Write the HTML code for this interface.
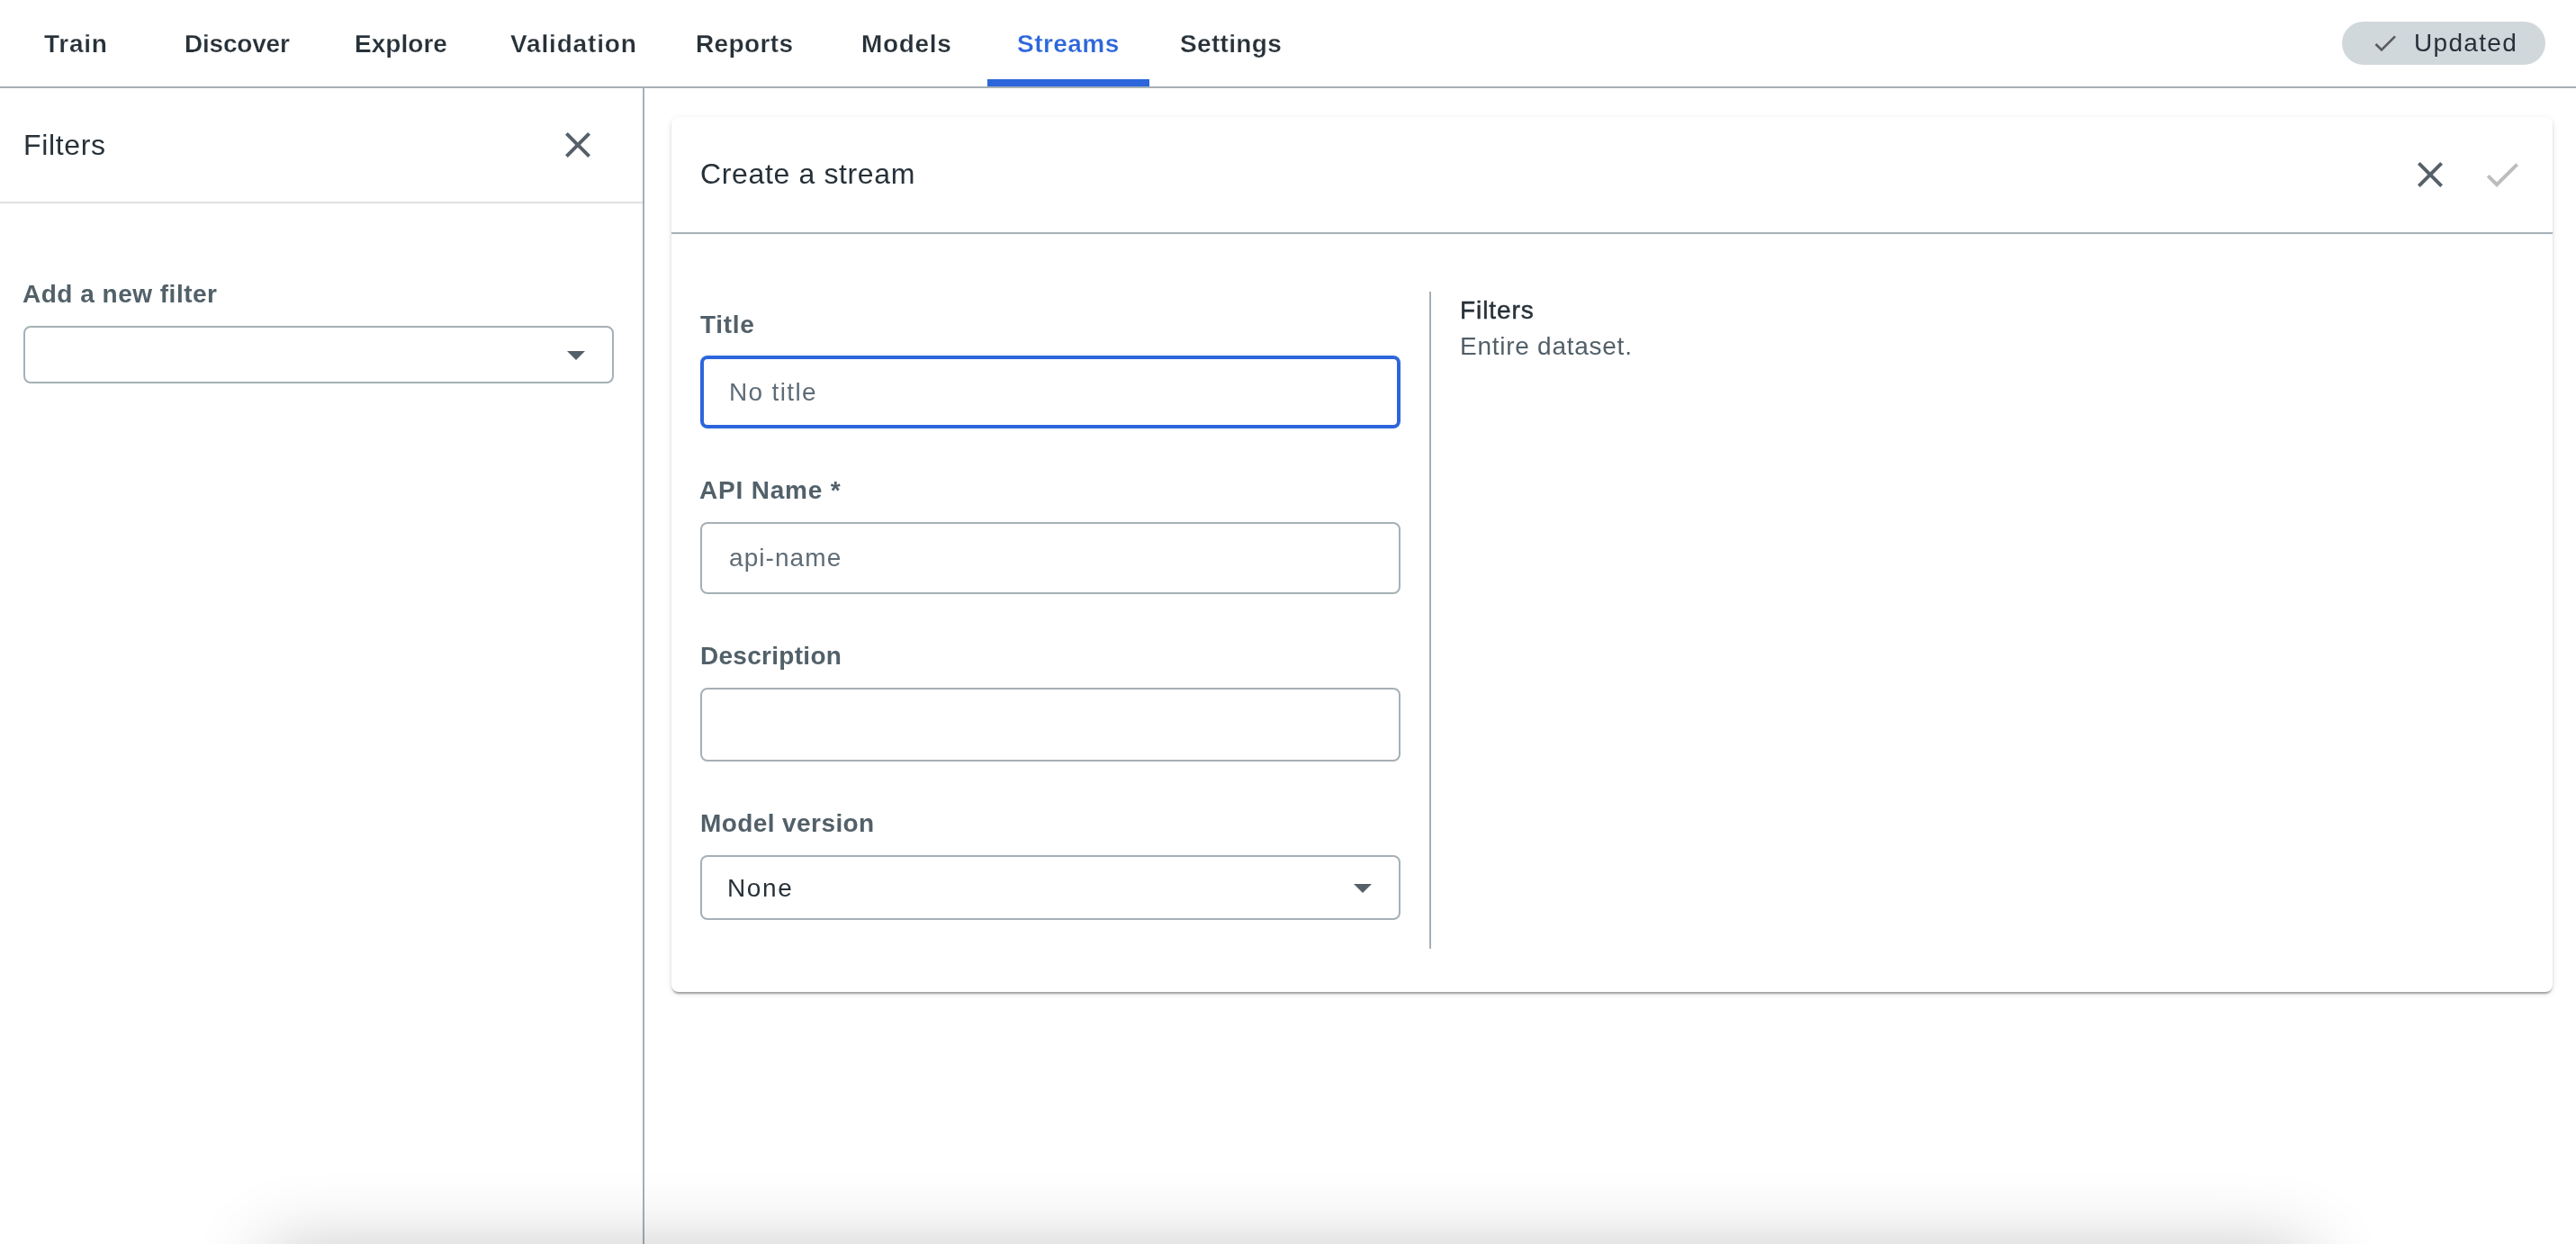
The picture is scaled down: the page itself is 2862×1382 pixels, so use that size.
<!DOCTYPE html>
<html lang="en">
<head>
<meta charset="utf-8">
<title>Streams</title>
<style>
*{box-sizing:border-box;margin:0;padding:0}
html,body{width:2862px;height:1382px;overflow:hidden;background:#fff}
body{position:relative;font-family:"Liberation Sans",sans-serif;color:#273139;font-size:28px}
#page{position:absolute;left:0;top:0;width:2862px;height:1382px;overflow:hidden;background:#fff}
.a{position:absolute}
.t{position:absolute;white-space:nowrap;line-height:1;font-size:28px;font-weight:400;will-change:transform}
.tab{font-weight:700;-webkit-text-stroke:.25px #fff}
.on{color:#2d66db}
.h{font-size:32px}
.lbl{font-weight:700;color:#526069}
.ph{color:#5f6c76}
.sub{color:#526069}
.med{-webkit-text-stroke:.5px #273139}
#nav{position:absolute;left:0;top:0;width:2862px;height:98px;border-bottom:2px solid #a6b0b6}
#ul{position:absolute;left:1097px;top:88px;width:180px;height:8px;background:#2d66db}
#pill{position:absolute;left:2602px;top:24px;width:226px;height:48px;border-radius:24px;background:#d1d8dc}
#left{position:absolute;left:0;top:98px;width:716px;height:1284px;border-right:2px solid #a6b0b6}
#lhead{position:absolute;left:0;top:0;width:714px;height:128px;border-bottom:2px solid #e0e0e0}
.box{position:absolute;border:2px solid #a6b0b6;border-radius:8px;background:#fff}
.focus{border:4px solid #2d66db}
.arrow{position:absolute;width:0;height:0;border-left:10px solid transparent;border-right:10px solid transparent;border-top:10px solid #566069}
#card{position:absolute;left:746px;top:130px;width:2090px;height:972px;border-radius:8px;background:#fff;box-shadow:0 4px 2px -2px rgba(0,0,0,.2),0 2px 2px 0 rgba(0,0,0,.14),0 2px 6px 0 rgba(0,0,0,.12)}
#chead{position:absolute;left:0;top:0;width:2090px;height:130px;border-bottom:2px solid #a6b0b6}
#vdiv{position:absolute;left:842px;top:194px;width:2px;height:730px;background:#a6b0b6}
#btm{position:absolute;left:302px;top:1392px;width:2258px;height:100px;box-shadow:0 0 84px 4px rgba(0,0,0,.24)}
</style>
</head>
<body>
<div id="page">

<!-- top navigation -->
<nav id="nav">
  <a class="t tab" style="left:49px;top:35px;letter-spacing:0.71px">Train</a>
  <a class="t tab" style="left:205px;top:35px;letter-spacing:-0.21px">Discover</a>
  <a class="t tab" style="left:394px;top:35px;letter-spacing:0.03px">Explore</a>
  <a class="t tab" style="left:567px;top:35px;letter-spacing:0.85px">Validation</a>
  <a class="t tab" style="left:773px;top:35px;letter-spacing:0.38px">Reports</a>
  <a class="t tab" style="left:957px;top:35px;letter-spacing:0.67px">Models</a>
  <a class="t tab on" style="left:1130px;top:35px;letter-spacing:0.45px">Streams</a>
  <a class="t tab" style="left:1311px;top:35px;letter-spacing:0.33px">Settings</a>
  <div id="ul"></div>
  <div id="pill">
    <svg class="a" style="left:32px;top:8px" width="32" height="32" viewBox="0 0 24 24"><path fill="#5c5c5c" d="M9 16.17L4.83 12l-1.42 1.41L9 19 21 7l-1.41-1.41z"/></svg>
    <span class="t" style="left:80px;top:10px;letter-spacing:1.31px">Updated</span>
  </div>
</nav>

<!-- left filter panel -->
<aside id="left">
  <header id="lhead">
    <h2 class="t h" style="left:26px;top:47px;letter-spacing:0.66px">Filters</h2>
    <svg class="a" style="left:618px;top:39px" width="48" height="48" viewBox="0 0 24 24"><path fill="#566069" d="M19 6.41L17.59 5 12 10.59 6.41 5 5 6.41 10.59 12 5 17.59 6.41 19 12 13.41 17.59 19 19 17.59 13.41 12z"/></svg>
  </header>
  <label class="t lbl" style="left:25px;top:215px;letter-spacing:0.5px">Add a new filter</label>
  <div class="box" style="left:26px;top:264px;width:656px;height:64px"></div>
  <div class="arrow" style="left:630px;top:292px"></div>
</aside>

<!-- create stream card -->
<section id="card">
  <header id="chead">
    <h2 class="t h" style="left:32px;top:47px;letter-spacing:0.64px">Create a stream</h2>
    <svg class="a" style="left:1930px;top:40px" width="48" height="48" viewBox="0 0 24 24"><path fill="#566069" d="M19 6.41L17.59 5 12 10.59 6.41 5 5 6.41 10.59 12 5 17.59 6.41 19 12 13.41 17.59 19 19 17.59 13.41 12z"/></svg>
    <svg class="a" style="left:2010px;top:40px" width="48" height="48" viewBox="0 0 24 24"><path fill="#bdbdbd" d="M9 16.17L4.83 12l-1.42 1.41L9 19 21 7l-1.41-1.41z"/></svg>
  </header>

  <label class="t lbl" style="left:32px;top:217px;letter-spacing:0.68px">Title</label>
  <div class="box focus" style="left:32px;top:265px;width:778px;height:81px"></div>
  <div class="t ph" style="left:64px;top:292px;letter-spacing:1.35px">No title</div>

  <label class="t lbl" style="left:31px;top:401px;letter-spacing:0.8px">API Name *</label>
  <div class="box" style="left:32px;top:450px;width:778px;height:80px"></div>
  <div class="t ph" style="left:64px;top:476px;letter-spacing:1.07px">api-name</div>

  <label class="t lbl" style="left:32px;top:585px;letter-spacing:0.29px">Description</label>
  <div class="box" style="left:32px;top:634px;width:778px;height:82px"></div>

  <label class="t lbl" style="left:32px;top:771px;letter-spacing:0.41px">Model version</label>
  <div class="box" style="left:32px;top:820px;width:778px;height:72px"></div>
  <div class="t" style="left:62px;top:843px;letter-spacing:1.65px">None</div>
  <div class="arrow" style="left:758px;top:852px"></div>

  <div id="vdiv"></div>
  <h3 class="t med" style="left:876px;top:201px;letter-spacing:0.94px">Filters</h3>
  <p class="t sub" style="left:876px;top:241px;letter-spacing:0.74px">Entire dataset.</p>
</section>

<!-- shadow of an off-screen element peeking in at the bottom edge -->
<div id="btm"></div>

</div>
</body>
</html>
